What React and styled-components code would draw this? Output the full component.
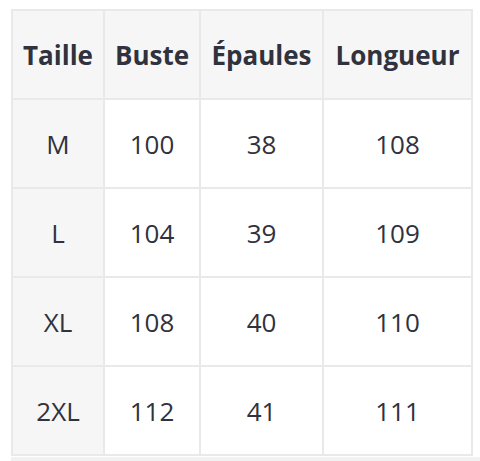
import React from 'react';
import styled, { createGlobalStyle } from 'styled-components';

const GlobalStyle = createGlobalStyle`
  body {
    margin: 0;
    background: #fff;
    font-family: "Open Sans", "Noto Sans", sans-serif;
    color: #333;
  }
`;

const Wrapper = styled.div`
  padding: 9px 0 0 11px;
`;

const Scroller = styled.div`
  display: flex;
  flex-direction: column;
`;

const Table = styled.table`
  border-collapse: collapse;
  table-layout: fixed;
  width: 460px;
`;

const HeadCell = styled.th`
  background: #f6f6f6;
  border: 2px solid #e9e9e9;
  height: 87px;
  padding: 0;
  font-size: 26px;
  font-weight: ${props => (props.$light ? 400 : 700)};
  color: #30323d;
  text-align: center;
`;

const Cell = styled.td`
  background: #fff;
  border: 2px solid #e9e9e9;
  height: 87px;
  padding: 0;
  font-size: 26px;
  font-weight: 400;
  color: #30323d;
  text-align: center;
`;

const Track = styled.div`
  height: 6px;
  margin-top: 1px;
  background: #f1f1f1;
  margin-right: -20px;
`;

const columns = ['Taille', 'Buste', 'Épaules', 'Longueur'];
const widths = [92, 96, 123, 149];

const rows = [
  ['M', 100, 38, 108],
  ['L', 104, 39, 109],
  ['XL', 108, 40, 110],
  ['2XL', 112, 41, 111],
];

export default function App() {
  return (
    <>
      <GlobalStyle />
      <Wrapper>
        <Scroller>
          <Table>
            <colgroup>
              {widths.map((w, i) => (
                <col key={i} style={{ width: w }} />
              ))}
            </colgroup>
            <thead>
              <tr>
                {columns.map(c => (
                  <HeadCell key={c}>{c}</HeadCell>
                ))}
              </tr>
            </thead>
            <tbody>
              {rows.map(([size, ...values]) => (
                <tr key={size}>
                  <HeadCell $light>{size}</HeadCell>
                  {values.map((v, i) => (
                    <Cell key={i}>{v}</Cell>
                  ))}
                </tr>
              ))}
            </tbody>
          </Table>
          <Track />
        </Scroller>
      </Wrapper>
    </>
  );
}
